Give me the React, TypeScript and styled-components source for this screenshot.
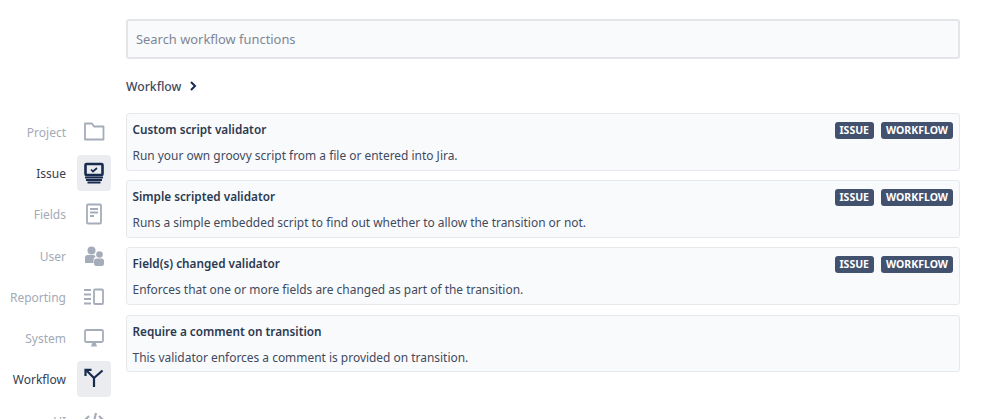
import React from "react";
import styled, { createGlobalStyle } from "styled-components";

const Global = createGlobalStyle`
  html, body { margin: 0; padding: 0; background: #fff; overflow: hidden; }
  body { font-family: "Noto Sans", "Open Sans", sans-serif; }
`;

const Page = styled.div`
  width: 999px;
  height: 419px;
  overflow: hidden;
  display: flex;
  align-items: flex-start;
`;

const Side = styled.nav`
  width: 111px;
  flex: none;
  padding-top: 111px;
  display: flex;
  flex-direction: column;
`;

const NavRow = styled.div`
  height: 41.3px;
  display: flex;
  align-items: center;
  justify-content: flex-end;
  gap: 11px;
`;

const NavLabel = styled.span<{ $on?: boolean }>`
  font-size: 12px;
  padding-top: 1px;
  color: ${(p) => (p.$on ? "#344055" : "#a3aab6")};
`;

const NavIcon = styled.div<{ $on?: boolean }>`
  width: 34px;
  height: 36px;
  border-radius: 4px;
  display: flex;
  align-items: center;
  justify-content: center;
  background: ${(p) => (p.$on ? "#ebecf0" : "transparent")};
  color: ${(p) => (p.$on ? "#172b4d" : "#a5adba")};
`;

const Main = styled.main`
  width: 834px;
  margin-left: 15px;
  padding-top: 19px;
  flex: none;
`;

const Search = styled.div`
  height: 39.5px;
  box-sizing: border-box;
  background: #f9fafc;
  border: 2px solid #e3e5e9;
  border-radius: 3px;
  display: flex;
  align-items: center;
  padding: 1px 0 0 8px;
  font-size: 12.9px;
  color: #7d8797;
`;

const Crumb = styled.div`
  margin-top: 17.5px;
  height: 20px;
  display: flex;
  align-items: center;
  gap: 7px;
  font-size: 12.2px;
  font-weight: 500;
  color: #3f4a5e;
`;

const List = styled.div`
  margin-top: 17px;
  display: flex;
  flex-direction: column;
  gap: 9.4px;
`;

const Card = styled.div`
  height: 57.8px;
  box-sizing: border-box;
  background: #f9fafc;
  border: 1px solid #e6e8ec;
  border-radius: 3px;
  padding: 0 6px 0 5.5px;
  display: flex;
  flex-direction: column;
`;

const CardHead = styled.div`
  height: 30px;
  display: flex;
  align-items: center;
  justify-content: space-between;
`;

const CardTitle = styled.span`
  font-size: 11.75px;
  font-weight: 600;
  color: #2b3950;
`;

const CardText = styled.div`
  font-size: 11.95px;
  line-height: 20px;
  padding-top: 2px;
  color: #3f4a5e;
`;

const Tags = styled.div`
  display: flex;
  gap: 7px;
  padding-top: 2px;
`;

const Tag = styled.span`
  background: #42526e;
  color: #fff;
  border-radius: 3px;
  height: 17px;
  padding: 0 5px;
  display: flex;
  align-items: center;
  font-size: 10.5px;
  font-weight: 700;
`;

const Ico: React.FC<{ children: React.ReactNode }> = ({ children }) => (
  <svg width={24} height={24} viewBox="0 0 24 24" fill="none" stroke="currentColor" strokeWidth={1.8}>
    {children}
  </svg>
);

const items: { label: string; on?: boolean; icon: React.ReactNode }[] = [
  {
    label: "Project",
    icon: (
      <Ico>
        <path d="M3 19.5V3.500h7l2 3h9.500v13z" strokeLinejoin="round" />
      </Ico>
    ),
  },
  {
    label: "Issue",
    on: true,
    icon: (
      <Ico>
        <rect x="3.500" y="3" width="17" height="11" rx="1" strokeWidth={2.6} />
        <path d="M9 8.500l2 2 4-3.500" strokeWidth={1.7} />
        <path d="M3 16.500h18M4 19h16M5.500 21.500h13" strokeWidth={1.9} />
      </Ico>
    ),
  },
  {
    label: "Fields",
    icon: (
      <Ico>
        <rect x="5" y="2.500" width="14" height="19" rx="1" />
        <path d="M8 7h8M8 10.500h8M8 14h4" />
      </Ico>
    ),
  },
  {
    label: "User",
    icon: (
      <Ico>
        <g fill="currentColor" stroke="none">
          <circle cx="9.500" cy="6.500" r="4" />
          <circle cx="17.500" cy="10.500" r="3.300" />
          <path d="M3 13.500q0-2.500 2.500-2.500h6q2 0 2 2-2 .5-2 3v3H3z" />
          <rect x="12" y="14.500" width="10" height="7.500" rx="2.500" />
        </g>
      </Ico>
    ),
  },
  {
    label: "Reporting",
    icon: (
      <Ico>
        <path d="M2 5h7M2 9.500h7M2 14h7M2 18.500h7" />
        <rect x="12" y="4.500" width="9" height="14.500" rx="1" />
      </Ico>
    ),
  },
  {
    label: "System",
    icon: (
      <Ico>
        <rect x="3" y="4" width="18" height="12" rx="1.500" />
        <path d="M9 20.500h6l-1.200-3.500h-3.600z" fill="currentColor" stroke="none" />
      </Ico>
    ),
  },
  {
    label: "Workflow",
    on: true,
    icon: (
      <Ico>
        <path d="M12 20v-9L4 3" strokeWidth={2.2} />
        <path d="M3.500 9V2.800H9.500" strokeWidth={2.2} />
        <path d="M12 11l8.500-7.500" strokeWidth={2.2} />
      </Ico>
    ),
  },
  {
    label: "UI",
    icon: (
      <Ico>
        <path d="M7 7l-5 5 5 5M17 7l5 5-5 5M14 4l-4 16" strokeWidth={2.2} />
      </Ico>
    ),
  },
];

const cards = [
  { t: "Custom script validator", d: "Run your own groovy script from a file or entered into Jira.", tags: true },
  { t: "Simple scripted validator", d: "Runs a simple embedded script to find out whether to allow the transition or not.", tags: true },
  { t: "Field(s) changed validator", d: "Enforces that one or more fields are changed as part of the transition.", tags: true },
  { t: "Require a comment on transition", d: "This validator enforces a comment is provided on transition.", tags: false },
];

export default function App() {
  return (
    <Page>
      <Global />
      <Side>
        {items.map((i) => (
          <NavRow key={i.label}>
            <NavLabel $on={i.on}>{i.label}</NavLabel>
            <NavIcon $on={i.on}>{i.icon}</NavIcon>
          </NavRow>
        ))}
      </Side>
      <Main>
        <Search>Search workflow functions</Search>
        <Crumb>
          Workflow
          <svg width="10" height="10" viewBox="0 0 10 10" fill="none" stroke="#172b4d" strokeWidth={2}>
            <path d="M3 1l4 4-4 4" />
          </svg>
        </Crumb>
        <List>
          {cards.map((c) => (
            <Card key={c.t}>
              <CardHead>
                <CardTitle>{c.t}</CardTitle>
                {c.tags && (
                  <Tags>
                    <Tag>ISSUE</Tag>
                    <Tag>WORKFLOW</Tag>
                  </Tags>
                )}
              </CardHead>
              <CardText>{c.d}</CardText>
            </Card>
          ))}
        </List>
      </Main>
    </Page>
  );
}
